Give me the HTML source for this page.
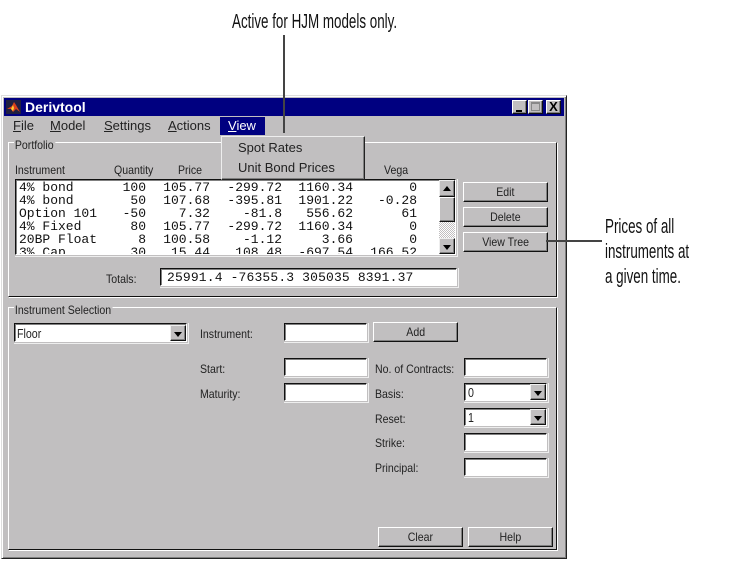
<!DOCTYPE html>
<html><head><meta charset="utf-8">
<style>
html,body{margin:0;padding:0;background:#fff;}
#p{position:relative;width:740px;height:563px;overflow:hidden;background:#fff;font-family:"Liberation Sans",sans-serif;color:#222;}
#p div{position:absolute;box-sizing:border-box;}
.t{font-size:12px;line-height:14px;white-space:nowrap;transform-origin:0 50%;transform:scaleX(.88);color:#222;}
.v{font-size:13px;line-height:15px;white-space:nowrap;transform-origin:0 50%;transform:scaleX(.82);color:#222;}
.m{font-size:13px;line-height:16px;white-space:nowrap;top:118px;color:#222;}
.m u{text-decoration:underline;}
.n{font-family:"Liberation Sans",sans-serif;font-size:20px;line-height:24px;white-space:nowrap;transform-origin:0 50%;transform:scaleX(.67);color:#111;}
.g{border:1px solid;border-color:#fff #111 #111 #fff;box-shadow:1px 1px 0 #fff;}
.b{background:#c1bfc0;border:1px solid;border-color:#fff #111 #111 #fff;box-shadow:inset -1px -1px 0 #808080;text-align:center;font-size:12px;line-height:19px;color:#222;}
.b span{display:inline-block;transform:scaleX(.88);}
.i{background:#fff;border:1px solid;border-color:#111 #fff #fff #111;box-shadow:inset 1px 1px 0 #808080,0 0 0 1px #c1bfc0,1px 1px 0 1px #eee;}
.d{background:#c1bfc0;border:1px solid;border-color:#eee #111 #111 #eee;box-shadow:inset -1px -1px 0 #808080;}
.d:after{content:"";position:absolute;left:3px;top:6px;border:4px solid transparent;border-top:5px solid #000;border-bottom:0;}
.d.u:after{border-top:0;border-bottom:5px solid #000;top:5px;}
.r{font-family:"Liberation Mono",monospace;font-size:13px;line-height:13px;white-space:pre;color:#111;left:3px;}
.c{text-align:right;}
</style></head><body>
<div id="p">

<div class="n" style="left:232px;top:10px;">Active for HJM models only.</div>
<div class="n" style="left:605px;top:215px;">Prices of all</div>
<div class="n" style="left:605px;top:240px;">instruments at</div>
<div class="n" style="left:605px;top:265px;">a given time.</div>

<!-- window -->
<div style="left:1px;top:95px;width:566px;height:464px;background:#c1bfc0;border:1px solid;border-color:#ddd #222 #222 #ddd;box-shadow:inset 1px 1px 0 #fff,inset -1px -1px 0 #808080;"></div>
<div style="left:4px;top:98px;width:560px;height:18px;background:#000080;"></div>
<svg style="position:absolute;left:6px;top:100px;" width="15" height="14" viewBox="0 0 15 14"><rect width="15" height="14" fill="#202040"/><path d="M1 9L6 6L8 2L10 5L14 12L10 9L7 12L5 9Z" fill="#d8401c"/><path d="M5 9L7 5L8 8L7 11Z" fill="#ffd030"/></svg>
<div style="left:25px;top:99px;font-size:14px;line-height:17px;font-weight:bold;color:#fff;white-space:nowrap;">Derivtool</div>
<div class="b" style="left:512px;top:100px;width:15px;height:14px;"><div style="left:3px;top:9px;width:6px;height:2px;background:#000;"></div></div>
<div class="b" style="left:528px;top:100px;width:15px;height:14px;"><div style="left:2px;top:1px;width:9px;height:9px;border:1px solid #888;border-top-width:2px;"></div></div>
<div class="b" style="left:546px;top:100px;width:15px;height:14px;font-weight:bold;font-size:13px;line-height:11px;color:#000;">X</div>

<!-- menu -->
<div class="m" style="left:13px;"><u>F</u>ile</div>
<div class="m" style="left:50px;"><u>M</u>odel</div>
<div class="m" style="left:104px;"><u>S</u>ettings</div>
<div class="m" style="left:168px;"><u>A</u>ctions</div>
<div style="left:220px;top:117px;width:45px;height:18px;background:#000080;"></div>
<div class="m" style="left:228px;color:#fff;"><u>V</u>iew</div>

<!-- portfolio group -->
<div class="g" style="left:8px;top:142px;width:549px;height:155px;"></div>
<div class="t" style="left:14px;top:138px;background:#c1bfc0;padding:0 2px 0 1px;">Portfolio</div>
<div class="t" style="left:15px;top:163px;">Instrument</div>
<div class="t" style="left:114px;top:163px;">Quantity</div>
<div class="t" style="left:178px;top:163px;">Price</div>
<div class="t" style="left:384px;top:163px;">Vega</div>

<!-- list -->
<div class="i" style="left:15px;top:179px;width:441px;height:76px;overflow:hidden;" id="l">
<div class="r" style="top:1px;">4% bond</div><div class="r c" style="top:1px;left:80px;width:50px;">100</div><div class="r c" style="top:1px;left:130px;width:64px;">105.77</div><div class="r c" style="top:1px;left:196px;width:70px;">-299.72</div><div class="r c" style="top:1px;left:267px;width:70px;">1160.34</div><div class="r c" style="top:1px;left:341px;width:60px;">0</div>
<div class="r" style="top:14px;">4% bond</div><div class="r c" style="top:14px;left:80px;width:50px;">50</div><div class="r c" style="top:14px;left:130px;width:64px;">107.68</div><div class="r c" style="top:14px;left:196px;width:70px;">-395.81</div><div class="r c" style="top:14px;left:267px;width:70px;">1901.22</div><div class="r c" style="top:14px;left:341px;width:60px;">-0.28</div>
<div class="r" style="top:27px;">Option 101</div><div class="r c" style="top:27px;left:80px;width:50px;">-50</div><div class="r c" style="top:27px;left:130px;width:64px;">7.32</div><div class="r c" style="top:27px;left:196px;width:70px;">-81.8</div><div class="r c" style="top:27px;left:267px;width:70px;">556.62</div><div class="r c" style="top:27px;left:341px;width:60px;">61</div>
<div class="r" style="top:40px;">4% Fixed</div><div class="r c" style="top:40px;left:80px;width:50px;">80</div><div class="r c" style="top:40px;left:130px;width:64px;">105.77</div><div class="r c" style="top:40px;left:196px;width:70px;">-299.72</div><div class="r c" style="top:40px;left:267px;width:70px;">1160.34</div><div class="r c" style="top:40px;left:341px;width:60px;">0</div>
<div class="r" style="top:53px;">20BP Float</div><div class="r c" style="top:53px;left:80px;width:50px;">8</div><div class="r c" style="top:53px;left:130px;width:64px;">100.58</div><div class="r c" style="top:53px;left:196px;width:70px;">-1.12</div><div class="r c" style="top:53px;left:267px;width:70px;">3.66</div><div class="r c" style="top:53px;left:341px;width:60px;">0</div>
<div class="r" style="top:66px;">3% Cap</div><div class="r c" style="top:66px;left:80px;width:50px;">30</div><div class="r c" style="top:66px;left:130px;width:64px;">15.44</div><div class="r c" style="top:66px;left:196px;width:70px;">108.48</div><div class="r c" style="top:66px;left:267px;width:70px;">-697.54</div><div class="r c" style="top:66px;left:341px;width:60px;">166.52</div>
</div>
<div style="left:439px;top:180px;width:16px;height:74px;background:repeating-conic-gradient(#c1bfc0 0 25%,#fff 0 50%) 0 0/2px 2px;"></div>
<div class="d u" style="left:439px;top:180px;width:16px;height:17px;"></div>
<div class="b" style="left:439px;top:197px;width:16px;height:25px;"></div>
<div class="d" style="left:439px;top:238px;width:16px;height:16px;"></div>

<!-- right buttons -->
<div class="b" style="left:463px;top:182px;width:85px;height:20px;"><span>Edit</span></div>
<div class="b" style="left:463px;top:207px;width:85px;height:20px;"><span>Delete</span></div>
<div class="b" style="left:463px;top:232px;width:85px;height:20px;"><span>View Tree</span></div>

<!-- totals -->
<div class="t" style="left:106px;top:272px;">Totals:</div>
<div class="i" style="left:160px;top:268px;width:297px;height:18px;"><div class="r" style="left:6px;top:2px;letter-spacing:.15px;">25991.4 -76355.3 305035 8391.37</div></div>

<!-- instrument group -->
<div class="g" style="left:8px;top:307px;width:549px;height:243px;"></div>
<div class="t" style="left:14px;top:303px;background:#c1bfc0;padding:0 2px 0 1px;">Instrument Selection</div>

<div class="i" style="left:14px;top:323px;width:173px;height:19px;"><div class="v" style="left:2px;top:2px;">Floor</div></div>
<div class="d" style="left:170px;top:325px;width:16px;height:16px;"></div>
<div class="t" style="left:200px;top:327px;">Instrument:</div>
<div class="i" style="left:284px;top:323px;width:83px;height:18px;"></div>
<div class="b" style="left:373px;top:322px;width:85px;height:20px;"><span>Add</span></div>

<div class="t" style="left:200px;top:362px;">Start:</div>
<div class="i" style="left:284px;top:358px;width:83px;height:18px;"></div>
<div class="t" style="left:200px;top:387px;">Maturity:</div>
<div class="i" style="left:284px;top:383px;width:83px;height:18px;"></div>

<div class="t" style="left:375px;top:362px;">No. of Contracts:</div>
<div class="i" style="left:464px;top:358px;width:83px;height:18px;"></div>
<div class="t" style="left:375px;top:387px;">Basis:</div>
<div class="i" style="left:464px;top:383px;width:83px;height:18px;"><div class="v" style="left:3px;top:1px;">0</div></div>
<div class="d" style="left:530px;top:384px;width:16px;height:16px;"></div>
<div class="t" style="left:375px;top:412px;">Reset:</div>
<div class="i" style="left:464px;top:408px;width:83px;height:18px;"><div class="v" style="left:3px;top:1px;">1</div></div>
<div class="d" style="left:530px;top:409px;width:16px;height:16px;"></div>
<div class="t" style="left:375px;top:436px;">Strike:</div>
<div class="i" style="left:464px;top:433px;width:83px;height:18px;"></div>
<div class="t" style="left:375px;top:461px;">Principal:</div>
<div class="i" style="left:464px;top:458px;width:83px;height:18px;"></div>

<div class="b" style="left:378px;top:527px;width:85px;height:20px;"><span>Clear</span></div>
<div class="b" style="left:468px;top:527px;width:85px;height:20px;"><span>Help</span></div>

<!-- dropdown -->
<div style="left:221px;top:136px;width:144px;height:44px;background:#c1bfc0;border:1px solid;border-color:#eee #222 #222 #eee;box-shadow:inset -1px -1px 0 #808080;"></div>
<div class="m" style="left:238px;top:140px;">Spot Rates</div>
<div class="m" style="left:238px;top:160px;">Unit Bond Prices</div>

<!-- callout lines -->
<div style="left:283px;top:35px;width:2px;height:98px;background:#444;"></div>
<div style="left:546px;top:240px;width:56px;height:2px;background:#444;"></div>
</div>
</body></html>
